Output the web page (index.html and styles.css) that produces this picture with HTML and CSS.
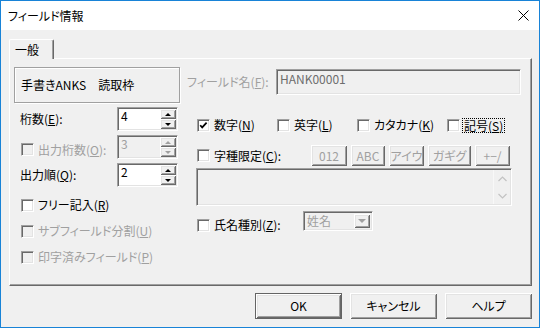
FILE: index.html
```html
<!DOCTYPE html>
<html lang="ja">
<head>
  <meta charset="UTF-8">
  <title>フィールド情報</title>
  <link rel="stylesheet" href="styles.css">
</head>
<body>

<div class="window">
  <div class="titlebar">
    <span class="title">フィールド情報</span>
    <svg class="close" width="11" height="11" viewBox="0 0 11 11">
      <path d="M0.5 0.5 L10.5 10.5 M10.5 0.5 L0.5 10.5" stroke="#000" stroke-width="1" fill="none"/>
    </svg>
  </div>

  <div class="client">
    <div class="tabs"><div class="tab">一般</div></div>

    <div class="panel">
      <!-- left column -->
      <div class="col-left">
        <div class="anks">手書きANKS　読取枠</div>

        <div class="spin-row">
          <span class="spin-label">桁数(<u>E</u>):</span>
          <div class="spin">
            <div class="spin-text">4</div>
            <div class="spin-btns">
              <div class="sb"><i class="up"></i></div>
              <div class="sb"><i class="down"></i></div>
            </div>
          </div>
        </div>

        <div class="spin-row">
          <span class="spin-label check-label off">
            <span class="cb off"></span>出力桁数(<u>O</u>):
          </span>
          <div class="spin off">
            <div class="spin-text">3</div>
            <div class="spin-btns">
              <div class="sb"><i class="up"></i></div>
              <div class="sb"><i class="down"></i></div>
            </div>
          </div>
        </div>

        <div class="spin-row">
          <span class="spin-label">出力順(<u>Q</u>):</span>
          <div class="spin">
            <div class="spin-text">2</div>
            <div class="spin-btns">
              <div class="sb"><i class="up"></i></div>
              <div class="sb"><i class="down"></i></div>
            </div>
          </div>
        </div>

        <div class="check-row"><span class="cb"></span>フリー記入(<u>R</u>)</div>
        <div class="check-row off"><span class="cb off"></span>サブフィールド分割(<u>U</u>)</div>
        <div class="check-row off"><span class="cb off"></span>印字済みフィールド(<u>P</u>)</div>
      </div>

      <!-- right column -->
      <div class="col-right">
        <div class="name-row">
          <span class="name-label off">フィールド名(<u>F</u>):</span>
          <div class="edit name-edit">HANK00001</div>
        </div>

        <div class="type-row">
          <span class="type-item w80">
            <span class="cb"><svg width="9" height="9" viewBox="0 0 9 9"><path d="M1.2 4.2 L3.2 6.4 L7.6 1.6" stroke="#000" stroke-width="1.7" fill="none"/></svg></span>数字(<u>N</u>)
          </span>
          <span class="type-item w80"><span class="cb"></span>英字(<u>L</u>)</span>
          <span class="type-item w90"><span class="cb"></span>カタカナ(<u>K</u>)</span>
          <span class="type-item"><span class="cb"></span><span class="focus">記号(<u>S</u>)</span></span>
        </div>

        <div class="limit-row">
          <span class="type-item limit-label"><span class="cb"></span>字種限定(<u>C</u>):</span>
          <div class="small-btns">
            <span class="btn small w36">012</span>
            <span class="btn small w34">ABC</span>
            <span class="btn small w35">アイウ</span>
            <span class="btn small w43">ガギグ</span>
            <span class="btn small w35">+−/</span>
          </div>
        </div>

        <div class="edit memo">
          <div class="memo-text"></div>
          <div class="vscroll">
            <svg width="9" height="6" viewBox="0 0 9 6"><path d="M0.5 5 L4.5 1 L8.5 5" stroke="#c2c2c2" stroke-width="1.2" fill="none"/></svg>
            <svg width="9" height="6" viewBox="0 0 9 6"><path d="M0.5 1 L4.5 5 L8.5 1" stroke="#c2c2c2" stroke-width="1.2" fill="none"/></svg>
          </div>
        </div>

        <div class="kind-row">
          <span class="type-item kind-label"><span class="cb"></span>氏名種別(<u>Z</u>):</span>
          <div class="edit combo">
            <span class="combo-text">姓名</span>
            <span class="combo-btn"><i class="tri"></i></span>
          </div>
        </div>
      </div>
    </div>

    <div class="footer">
      <button class="btn big default">OK</button>
      <button class="btn big">キャンセル</button>
      <button class="btn big">ヘルプ</button>
    </div>
  </div>
</div>

</body>
</html>
```

FILE: styles.css
```css
* {
  box-sizing: border-box;
}
html, body {
  margin: 0;
}
body {
  font-family: "Noto Sans CJK JP", sans-serif;
  font-size: 12px;
  line-height: 14px;
  font-feature-settings: "palt";
  color: #000;
  background: #fff;
}
u {
  text-decoration-thickness: 1px;
  text-underline-offset: 1px;
}
.off {
  color: #a0a0a0;
}

/* window frame */
.window {
  width: 540px;
  height: 328px;
  border: 1px solid #1883d7;
  display: flex;
  flex-direction: column;
  background: #f0f0f0;
}
.titlebar {
  height: 29px;
  flex: none;
  background: #fff;
  display: flex;
  align-items: center;
  justify-content: space-between;
  padding: 0 10px 0 7px;
}
.title {
  line-height: 16px;
}
.close {
  display: block;
}
.client {
  flex: 1;
  padding: 9px 7px 0 8px;
}

/* tab */
.tabs {
  display: flex;
}
.tab {
  width: 45px;
  height: 20px;
  padding: 2px 0 0 5px;
  line-height: 16px;
  border-top: 1px solid #fff;
  border-left: 1px solid #fff;
  border-right: 1px solid #696969;
  box-shadow: inset -1px 0 #a0a0a0;
  border-radius: 2px 2px 0 0;
  background: #f0f0f0;
  position: relative;
  z-index: 1;
  margin-bottom: -1px;
}
.panel {
  height: 228px;
  border-top: 1px solid #fff;
  border-left: 1px solid #fff;
  border-right: 1px solid #696969;
  border-bottom: 1px solid #696969;
  box-shadow: inset -1px -1px #a0a0a0;
  padding: 8px 0 0 4px;
  display: flex;
}

/* 3d borders */
.edit, .spin, .cb {
  border-top: 1px solid #a0a0a0;
  border-left: 1px solid #a0a0a0;
  border-right: 1px solid #fff;
  border-bottom: 1px solid #fff;
  box-shadow: inset 1px 1px #696969, inset -1px -1px #e3e3e3;
}
.btn, .sb, .combo-btn {
  box-shadow: inset 1px 1px #fff, inset -1px -1px #696969, inset 2px 2px #e3e3e3, inset -2px -2px #a0a0a0;
  background: #f0f0f0;
}

/* checkbox */
.cb {
  width: 13px;
  height: 13px;
  flex: none;
  background: #fff;
  display: inline-flex;
  align-items: center;
  justify-content: center;
  margin-right: 4px;
}
.cb.off {
  background: #f0f0f0;
}
.cb svg {
  display: block;
}

/* left column */
.col-left {
  width: 166px;
  display: flex;
  flex-direction: column;
}
.anks {
  height: 36px;
  border: 1px solid #a0a0a0;
  box-shadow: inset 1px 1px #fff, 1px 1px #fff;
  padding-left: 6px;
  display: flex;
  align-items: center;
}
.spin-row {
  display: flex;
  align-items: center;
  height: 24px;
  margin-top: 4px;
}
.spin-label {
  width: 103px;
  padding-left: 6px;
  display: flex;
  align-items: center;
}
.check-label {
  padding-left: 7px;
  margin-top: 5px;
}
.spin {
  width: 61px;
  height: 24px;
  display: flex;
  background: #fff;
  padding: 1px;
}
.spin.off {
  background: #f0f0f0;
}
.spin-text {
  flex: 1;
  padding: 0 2px;
  line-height: 14px;
}
.spin-btns {
  width: 16px;
  display: flex;
  flex-direction: column;
}
.sb {
  flex: 1;
  display: flex;
  align-items: center;
  justify-content: center;
}
.sb i {
  width: 0;
  height: 0;
  border-left: 3px solid transparent;
  border-right: 3px solid transparent;
}
.sb .up {
  border-bottom: 3px solid #000;
}
.sb .down {
  border-top: 3px solid #000;
}
.spin.off .sb .up {
  border-bottom-color: #a0a0a0;
}
.spin.off .sb .down {
  border-top-color: #a0a0a0;
}
.check-row {
  height: 26px;
  display: flex;
  align-items: center;
  padding-left: 7px;
}
.spin-row + .check-row {
  margin-top: 5px;
}

/* right column */
.col-right {
  width: 334px;
  margin-left: 7px;
  display: flex;
  flex-direction: column;
}
.name-row {
  display: flex;
  align-items: center;
  height: 26px;
  margin-top: 2px;
}
.name-label {
  width: 89px;
}
.edit {
  background: #f0f0f0;
}
.name-edit {
  width: 245px;
  height: 26px;
  padding: 2px 3px;
  color: #6d6d6d;
}
.type-row {
  display: flex;
  align-items: center;
  height: 20px;
  margin-top: 20px;
  padding-left: 10px;
}
.type-item {
  display: flex;
  align-items: center;
}
.w80 { width: 80px; }
.w90 { width: 90px; }
.focus {
  border: 1px dotted #000;
  line-height: 13px;
  padding: 0 1px;
  margin-left: -2px;
}
.limit-row {
  display: flex;
  align-items: center;
  height: 21px;
  margin-top: 10px;
  padding-left: 10px;
}
.limit-label {
  width: 114px;
}
.small-btns {
  display: flex;
  gap: 4px;
}
.btn {
  display: inline-flex;
  align-items: center;
  justify-content: center;
  border: none;
  font: inherit;
  color: #000;
  padding: 0;
}
.btn.small {
  height: 21px;
  color: #a0a0a0;
}
.w34 { width: 34px; }
.w35 { width: 35px; }
.w36 { width: 36px; }
.w43 { width: 43px; }
.memo {
  width: 316px;
  height: 38px;
  margin: 2px 0 0 9px;
  display: flex;
  padding: 1px;
}
.memo-text {
  flex: 1;
}
.vscroll {
  width: 17px;
  border-left: 1px solid #f8f8f8;
  display: flex;
  flex-direction: column;
  align-items: center;
  justify-content: space-between;
  padding: 6px 0 5px;
}
.vscroll svg {
  display: block;
}
.kind-row {
  display: flex;
  align-items: flex-start;
  height: 20px;
  margin-top: 5px;
  padding-left: 10px;
}
.kind-label {
  width: 106px;
  margin-top: 7px;
}
.combo {
  width: 70px;
  height: 20px;
  padding: 2px;
  display: flex;
  color: #a0a0a0;
}
.combo-text {
  flex: 1;
  line-height: 14px;
  padding-left: 1px;
}
.combo-btn {
  width: 16px;
  display: flex;
  align-items: center;
  justify-content: center;
}
.combo-btn .tri {
  width: 0;
  height: 0;
  border-left: 4px solid transparent;
  border-right: 4px solid transparent;
  border-top: 4px solid #a0a0a0;
}

/* bottom buttons */
.footer {
  display: flex;
  justify-content: flex-end;
  gap: 8px;
  margin-top: 7px;
}
.btn.big {
  width: 87px;
  height: 26px;
}
.btn.default {
  border: 1px solid #646464;
}
```
